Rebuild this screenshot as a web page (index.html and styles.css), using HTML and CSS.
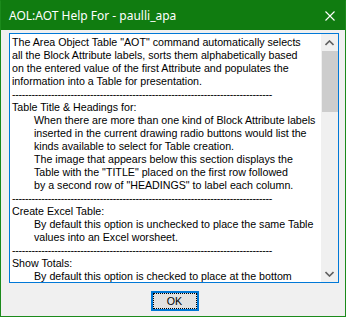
FILE: index.html
```html
<!DOCTYPE html>
<html lang="en">
<head>
    <meta charset="UTF-8">
    <title>AOL:AOT Help For - paulli_apa</title>
    <link rel="stylesheet" href="styles.css">
</head>
<body>

    <div class="window">
        <div class="titlebar">
            <span class="title">AOL:AOT Help For - paulli_apa</span>
            <svg class="close" width="10" height="10" viewBox="0 0 10 10">
                <path d="M0.5 0.5 L9.5 9.5 M9.5 0.5 L0.5 9.5" stroke="#fff" stroke-width="1.1" fill="none"/>
            </svg>
        </div>

        <div class="client">
            <div class="helpbox">
                <div class="helptext">
                    <div class="line">The Area Object Table "AOT" command automatically selects</div>
                    <div class="line">all the Block Attribute labels, sorts them alphabetically based</div>
                    <div class="line">on the entered value of the first Attribute and populates the</div>
                    <div class="line">information into a Table for presentation.</div>
                    <div class="line rule">--------------------------------------------------------------------------------</div>
                    <div class="line">Table Title &amp; Headings for:</div>
                    <div class="line indent">When there are more than one kind of Block Attribute labels</div>
                    <div class="line indent">inserted in the current drawing radio buttons would list the</div>
                    <div class="line indent">kinds available to select for Table creation.</div>
                    <div class="line indent">The image that appears below this section displays the</div>
                    <div class="line indent">Table with the "TITLE" placed on the first row followed</div>
                    <div class="line indent">by a second row of "HEADINGS" to label each column.</div>
                    <div class="line rule">--------------------------------------------------------------------------------</div>
                    <div class="line">Create Excel Table:</div>
                    <div class="line indent">By default this option is unchecked to place the same Table</div>
                    <div class="line indent">values into an Excel worsheet.</div>
                    <div class="line rule">--------------------------------------------------------------------------------</div>
                    <div class="line">Show Totals:</div>
                    <div class="line indent">By default this option is checked to place at the bottom</div>
                </div>

                <div class="scrollbar">
                    <div class="arrow">
                        <svg width="9" height="6" viewBox="0 0 9 6">
                            <path d="M0.5 5 L4.5 1 L8.5 5" stroke="#606060" stroke-width="1.6" fill="none"/>
                        </svg>
                    </div>
                    <div class="track">
                        <div class="thumb"></div>
                    </div>
                    <div class="arrow">
                        <svg width="9" height="6" viewBox="0 0 9 6">
                            <path d="M0.5 1 L4.5 5 L8.5 1" stroke="#606060" stroke-width="1.6" fill="none"/>
                        </svg>
                    </div>
                </div>
            </div>

            <div class="actions">
                <button class="ok-btn"><span class="focus">OK</span></button>
            </div>
        </div>
    </div>

</body>
</html>
```

FILE: styles.css
```css
body {
    margin: 0;
    background-color: #fff;
}

.window {
    width: 346px;
    height: 317px;
    box-sizing: border-box;
    border: 1px solid #1b8a1b;
    border-top-color: #107c10;
    background-color: #f0f0f0;
    display: flex;
    flex-direction: column;
}

.titlebar {
    height: 29px;
    background-color: #107c10;
    display: flex;
    align-items: center;
    padding: 0 10px 0 8px;
    flex-shrink: 0;
}

.title {
    font-family: "Noto Sans", sans-serif;
    font-size: 12px;
    color: #fff;
    flex: 1;
    padding-bottom: 1px;
}

.close {
    display: block;
}

.client {
    padding: 3px 6px 0 8px;
}

.helpbox {
    height: 250px;
    box-sizing: border-box;
    border: 1px solid #0078d7;
    background-color: #fff;
    display: flex;
    overflow: hidden;
}

.helptext {
    flex: 1;
    padding: 2px 0 0 2px;
    font-family: "Liberation Sans", Arial, sans-serif;
    font-size: 10.67px;
    line-height: 13px;
    color: #000;
    overflow: hidden;
}

.line {
    white-space: nowrap;
}

.indent {
    padding-left: 22px;
}

.rule {
    letter-spacing: -0.3px;
    color: #000;
}

.scrollbar {
    width: 17px;
    background-color: #f0f0f0;
    display: flex;
    flex-direction: column;
}

.arrow {
    height: 17px;
    display: flex;
    align-items: center;
    justify-content: center;
}

.track {
    flex: 1;
}

.thumb {
    height: 61px;
    margin-left: 1px;
    background-color: #cdcdcd;
}

.actions {
    display: flex;
    justify-content: center;
    padding-top: 8px;
}

.ok-btn {
    width: 48px;
    height: 20px;
    padding: 0;
    border: 2px solid #0078d7;
    background-color: #e1e1e1;
    font-family: "Liberation Sans", Arial, sans-serif;
    font-size: 10.67px;
    color: #000;
    margin-left: 1px;
}

.focus {
    display: flex;
    align-items: center;
    justify-content: center;
    height: 100%;
    box-sizing: border-box;
    border: 1px dotted #000;
}
```
